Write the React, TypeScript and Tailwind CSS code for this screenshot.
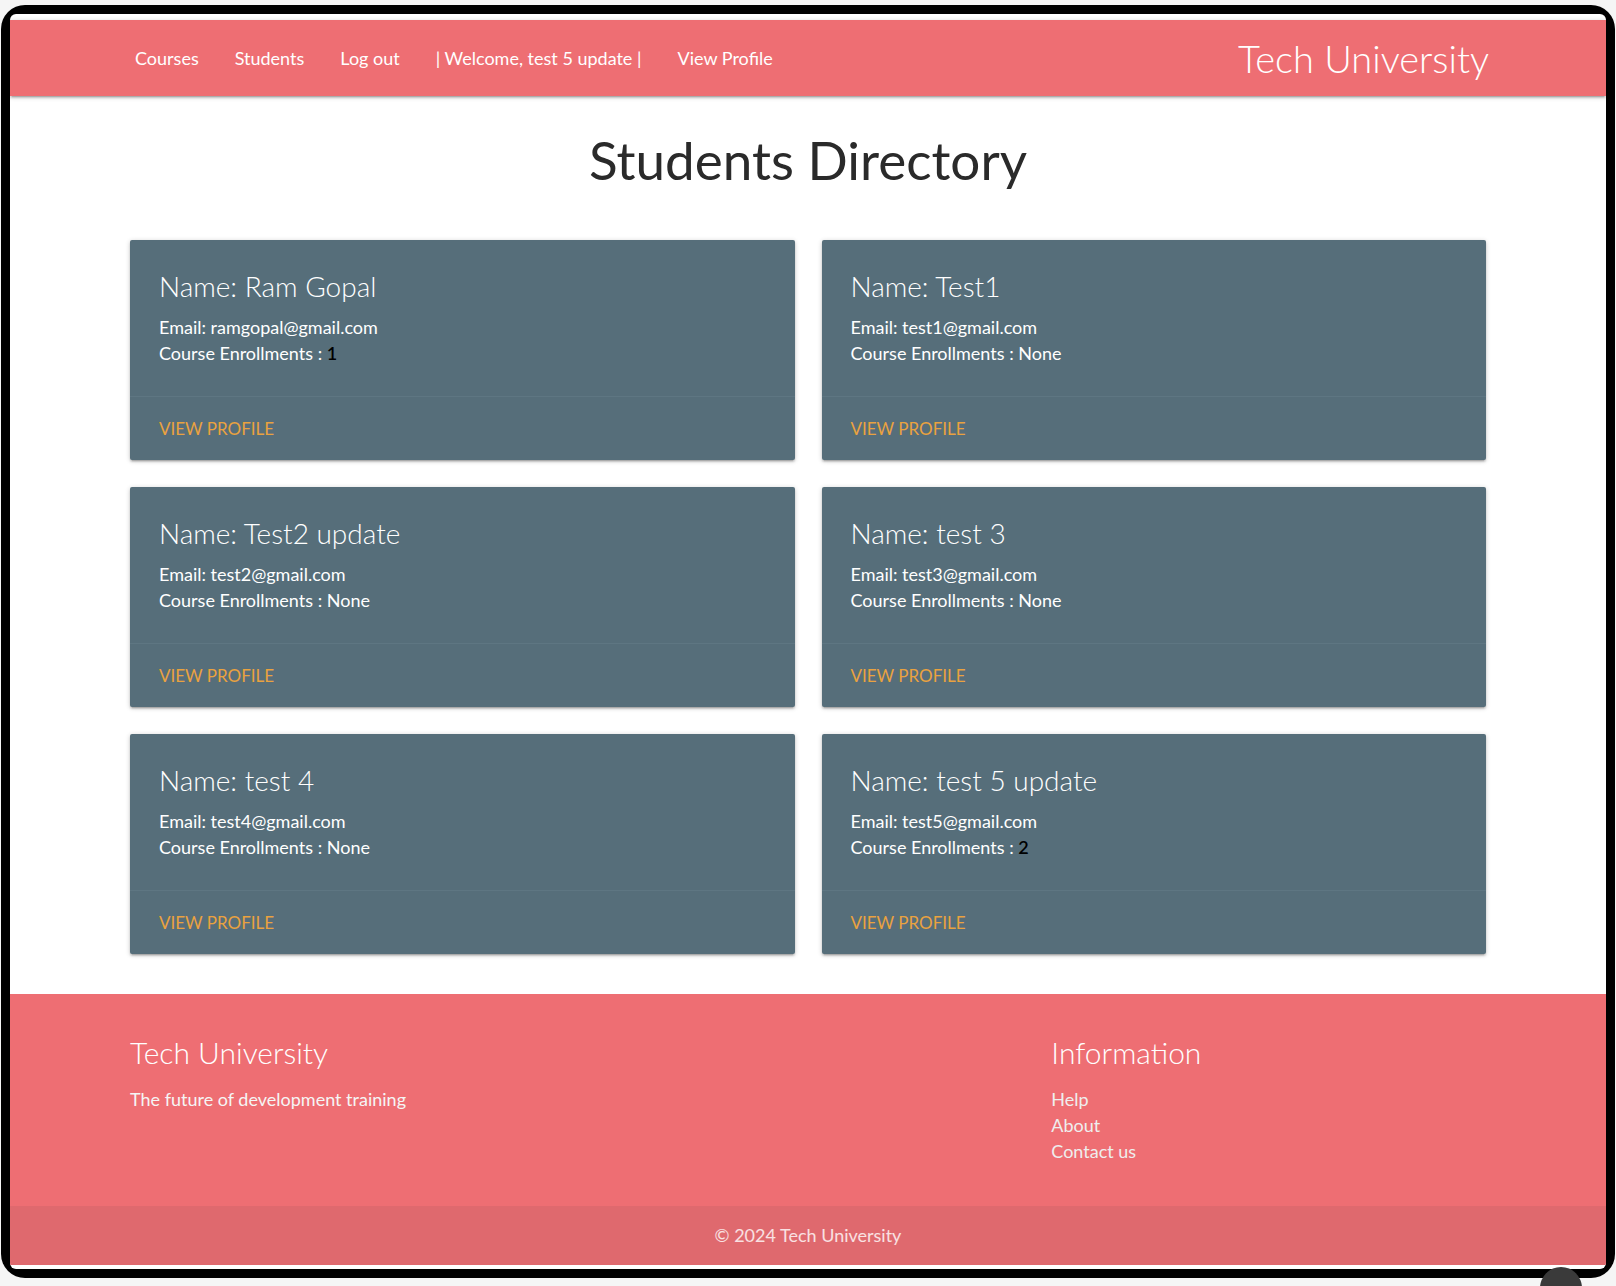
import React from 'react';

type Student = {
  name: string;
  email: string;
  enrollments: string;
  count?: boolean;
};

const students: Student[] = [
  { name: 'Ram Gopal', email: 'ramgopal@gmail.com', enrollments: '1', count: true },
  { name: 'Test1', email: 'test1@gmail.com', enrollments: 'None' },
  { name: 'Test2 update', email: 'test2@gmail.com', enrollments: 'None' },
  { name: 'test 3', email: 'test3@gmail.com', enrollments: 'None' },
  { name: 'test 4', email: 'test4@gmail.com', enrollments: 'None' },
  { name: 'test 5 update', email: 'test5@gmail.com', enrollments: '2', count: true },
];

const navLinks = ['Courses', 'Students', 'Log out', '| Welcome, test 5 update |', 'View Profile'];

const shadow = 'shadow-[0_2px_2px_0_rgba(0,0,0,0.14),0_3px_1px_-2px_rgba(0,0,0,0.12),0_1px_5px_0_rgba(0,0,0,0.2)]';

function StudentCard({ student }: { student: Student }) {
  return (
    <div className={`flex h-[220px] flex-col rounded-[2px] bg-[#566e7a] ${shadow}`}>
      <div className="h-[156px] px-[29px] pt-[28px]">
        <div className="text-[28px] font-light leading-[36px] text-white">Name: {student.name}</div>
        <div className="mt-[10px] text-[18px] leading-[26px] text-white">
          <p>Email: {student.email}</p>
          <p>
            Course Enrollments :{' '}
            <span className={student.count ? 'font-semibold text-black' : ''}>{student.enrollments}</span>
          </p>
        </div>
      </div>
      <div className="flex h-[64px] items-center border-t border-[#5e7682] px-[29px]">
        <a href="#" className="text-[17px] uppercase text-[#eaa23f]">
          View Profile
        </a>
      </div>
    </div>
  );
}

export default function App() {
  return (
    <div className="relative h-[1286px] w-[1616px] overflow-hidden bg-[#f5f5f5] px-[1px] pb-[8px] pt-[5px] font-['Lato',sans-serif]">
      <div className="h-full rounded-[24px] bg-black p-[9px]">
        <div className="flex h-full flex-col overflow-hidden rounded-[6px] bg-white pb-[4px] pt-[6px]">
          <nav className={`relative z-10 h-[76px] shrink-0 bg-[#ee6e73] ${shadow}`}>
            <div className="mx-auto flex h-full w-[1382px] items-center justify-between">
              <ul className="flex">
                {navLinks.map((l) => (
                  <li key={l}>
                    <a href="#" className="px-[18px] text-[18px] text-white">
                      {l}
                    </a>
                  </li>
                ))}
              </ul>
              <a href="#" className="pr-[10px] text-[38px] font-light text-white">
                Tech University
              </a>
            </div>
          </nav>

          <main className="flex-1">
            <h3 className="mt-[32px] text-center text-[53px] leading-[64px] text-[#2a2a2a]">Students Directory</h3>
            <div className="mx-auto mt-[48px] grid w-[1356px] grid-cols-2 gap-[27px]">
              {students.map((s) => (
                <StudentCard key={s.name} student={s} />
              ))}
            </div>
          </main>

          <footer className="h-[212px] shrink-0 bg-[#ee6e73]">
            <div className="mx-auto flex w-[1382px] pt-[34px]">
              <div className="w-1/2 px-[13px]">
                <h5 className="text-[30px] font-light leading-[48px] text-white">Tech University</h5>
                <p className="mt-[10px] text-[18px] leading-[26px] text-[#f5f5f5]">The future of development training</p>
              </div>
              <div className="ml-[16.666%] w-1/3 px-[13px]">
                <h5 className="text-[30px] font-light leading-[48px] text-white">Information</h5>
                <ul className="mt-[10px] text-[18px] leading-[26px] text-[#eeeeee]">
                  <li><a href="#">Help</a></li>
                  <li><a href="#">About</a></li>
                  <li><a href="#">Contact us</a></li>
                </ul>
              </div>
            </div>
          </footer>
          <div className="flex h-[59px] shrink-0 items-center justify-center bg-[#df696e] text-[18px] text-white/80">
            © 2024 Tech University
          </div>
        </div>
      </div>
      <div className="absolute left-[1540px] top-[1267px] h-[42px] w-[42px] rounded-full bg-[#3a3a3a]" />
    </div>
  );
}
